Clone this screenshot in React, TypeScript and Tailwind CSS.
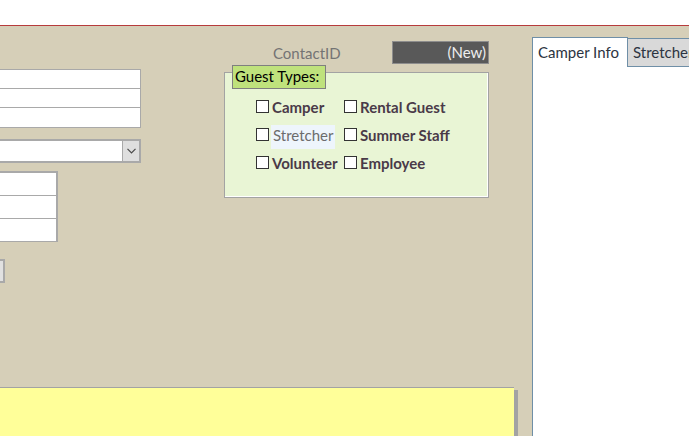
type GuestType = { label: string; bold?: boolean; focused?: boolean };

const guestColumns: GuestType[][] = [
  [
    { label: "Camper", bold: true },
    { label: "Stretcher", focused: true },
    { label: "Volunteer", bold: true },
  ],
  [
    { label: "Rental Guest", bold: true },
    { label: "Summer Staff", bold: true },
    { label: "Employee", bold: true },
  ],
];

function CheckItem({ item }: { item: GuestType }) {
  return (
    <div className="flex items-start h-[24px]">
      <span className="mt-[3px] w-[13px] h-[13px] shrink-0 border border-[#333333] bg-white" />
      <span
        className={
          item.focused
            ? "ml-[2px] h-[24px] px-[2px] text-[15px] leading-[20px] text-[#6c6c6c] bg-[#eef5fc] whitespace-nowrap"
            : "ml-[2px] h-[24px] px-[1px] text-[15px] leading-[20px] font-bold text-[#4a3a48] whitespace-nowrap"
        }
      >
        {item.label}
      </span>
    </div>
  );
}

function FieldColumn() {
  return (
    <div className="w-[141px] shrink-0 pt-[43px] flex flex-col">
      {/* name / address boxes */}
      <div className="border border-l-0 border-[#a9a9a9] bg-white">
        <div className="h-[19px] border-b border-[#a9a9a9]" />
        <div className="h-[19px] border-b border-[#a9a9a9]" />
        <div className="h-[19px]" />
      </div>

      {/* combo box */}
      <div className="mt-[11px] h-[24px] flex border-2 border-l-0 border-[#a9a9a9] bg-white">
        <div className="ml-auto w-[17px] h-full bg-[#dfdfdf] border-l border-[#a9a9a9] flex items-center justify-center">
          <svg width="9" height="6" viewBox="0 0 9 6">
            <polyline points="0.5,0.8 4.5,4.8 8.5,0.8" fill="none" stroke="#4a4a4a" strokeWidth="1.2" />
          </svg>
        </div>
      </div>

      {/* short fields */}
      <div className="mt-[8px] w-[58px] border-t-2 border-r-2 border-b border-[#a9a9a9] bg-white">
        <div className="h-[23px] border-b border-[#a9a9a9]" />
        <div className="h-[23px] border-b border-[#a9a9a9]" />
        <div className="h-[22px]" />
      </div>

      {/* command button edge */}
      <div className="mt-[17px] w-[5px] h-[24px] border-2 border-l-0 border-[#a9a9a9] bg-[#e1e1e1]" />
    </div>
  );
}

function GuestPanel() {
  return (
    <div className="ml-[83px] w-[265px] shrink-0 pt-[15px]">
      <div className="flex items-center h-[23px]">
        <span className="ml-[49px] text-[15px] leading-[20px] text-[#747474]">ContactID</span>
        <div className="ml-auto w-[97px] h-full bg-[#595959] border border-[#8d8d8d] pr-[2px] text-right text-[15px] leading-[20px] text-[#eeeeee]">
          (New)
        </div>
      </div>

      <div className="mt-[8px] h-[126px] border border-[#a3a3a3] bg-[#e9f5d5] shadow-[inset_-1px_-1px_0_#ffffff]">
        <div className="ml-[7px] -mt-[8px] w-[94px] h-[24px] border border-[#7f7f7f] bg-[#bfe27c] px-[2px] text-[15px] leading-[20px] text-black whitespace-nowrap">
          Guest Types:
        </div>
        <div className="mt-[8px] pl-[31px] flex">
          {guestColumns.map((col, i) => (
            <div key={i} className={i === 0 ? "w-[88px] flex flex-col gap-[4px]" : "flex flex-col gap-[4px]"}>
              {col.map((item) => (
                <CheckItem key={item.label} item={item} />
              ))}
            </div>
          ))}
        </div>
      </div>
    </div>
  );
}

function TabControl() {
  return (
    <div className="flex-1 min-w-0 flex flex-col pt-[11px]">
      <div className="flex items-end h-[30px] overflow-hidden">
        <div className="w-[96px] h-[30px] shrink-0 pl-[5px] pt-[4px] bg-white border border-b-0 border-[#6f8fa7] text-[15px] leading-[20px] text-[#2c3441] whitespace-nowrap">
          Camper Info
        </div>
        <div className="w-[90px] h-[29px] shrink-0 pl-[5px] pt-[3px] bg-[#d9d9d9] border-t border-b border-r border-[#6f8fa7] text-[15px] leading-[20px] text-[#2c3441] whitespace-nowrap">
          Stretcher
        </div>
      </div>
      <div className="flex-1 bg-white border-l border-[#6f8fa7]" />
    </div>
  );
}

export default function App() {
  return (
    <div className="w-[689px] h-[436px] overflow-hidden flex flex-col bg-[#d6cfb8] font-['Lato',sans-serif]">
      <div className="h-[26px] shrink-0 bg-white border-b border-[#b73c3c]" />
      <div className="flex flex-1 min-h-0">
        <div className="w-[532px] shrink-0 flex flex-col">
          <div className="flex">
            <FieldColumn />
            <GuestPanel />
          </div>
          <div className="mt-auto mr-[18px] h-[49px] shrink-0 bg-[#ffff99] border-t border-[#a3a3a3] shadow-[4px_3px_0_#a3a3a3]" />
        </div>
        <TabControl />
      </div>
    </div>
  );
}
